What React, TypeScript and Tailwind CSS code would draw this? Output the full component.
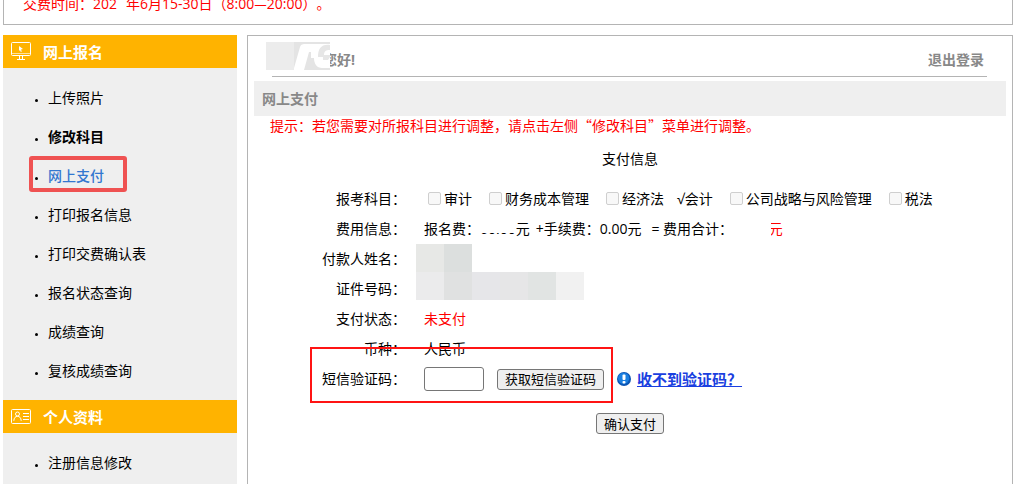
import type { ReactNode } from "react";

const registrationLinks = [
  "上传照片",
  "修改科目",
  "网上支付",
  "打印报名信息",
  "打印交费确认表",
  "报名状态查询",
  "成绩查询",
  "复核成绩查询",
];

const buttonClass =
  "h-[21px] rounded-[3px] border border-[#767676] bg-[#efefef] px-[7px] text-[13px] leading-[18px] whitespace-nowrap text-black";

function MonitorIcon() {
  return (
    <svg width="20" height="19" viewBox="0 0 20 19" fill="none" stroke="#fff" aria-hidden="true">
      <rect x="0.5" y="0.5" width="19" height="13" rx="1" />
      <path d="M1 11.5h18" opacity="0.6" />
      <path d="M8.5 14v3M11.5 14v3M6 17.5h8" />
      <path d="M8 4l4 3-2 .4.8 2-1 .5-.8-2-1 1z" fill="#fff" stroke="none" />
    </svg>
  );
}

function CardIcon() {
  return (
    <svg width="20" height="15" viewBox="0 0 20 15" fill="none" stroke="#fff" aria-hidden="true">
      <rect x="0.5" y="0.5" width="19" height="14" rx="1" />
      <circle cx="6.5" cy="5" r="2" />
      <path d="M2.8 11.8c.2-3 1.600-4.500 3.700-4.500s3.500 1.500 3.700 4.500" />
      <path d="M12 4.500h6M12 7.500h6M12 10.500h6" />
    </svg>
  );
}

function AlertIcon() {
  return (
    <svg width="14" height="14" viewBox="0 0 14 14" aria-hidden="true">
      <circle cx="7" cy="7" r="7" fill="#0a55b5" />
      <circle cx="6.600" cy="6.300" r="5.600" fill="#1b7fe0" />
      <rect x="5.500" y="2.500" width="3" height="5.500" rx="1" fill="#fff" />
      <rect x="5.500" y="9" width="3" height="2.500" rx="1" fill="#fff" />
    </svg>
  );
}

function MenuHeader({ icon, children }: { icon: ReactNode; children: ReactNode }) {
  return (
    <h2 className="flex h-[33px] items-center bg-[#ffb300] pl-2 text-[15px] font-bold text-white">
      <span className="mr-3 w-5">{icon}</span>
      {children}
    </h2>
  );
}

function MenuItem({ label }: { label: string }) {
  const active = label === "网上支付";
  const tone = active
    ? "font-medium text-[#3377d0]"
    : label === "修改科目"
      ? "font-bold text-black"
      : "text-black";
  return (
    <li className="relative flex h-[39px] items-center pl-8">
      <span className="mt-[6px] mr-[10px] size-[3px] rounded-full bg-black" />
      <a href="#" className={tone}>
        {label}
      </a>
      {active && (
        <span className="pointer-events-none absolute top-0 left-[26px] h-9 w-[98px] rounded-[3px] border-4 border-[#ef5252]" />
      )}
    </li>
  );
}

function Row({ label, htmlFor, children }: { label: string; htmlFor?: string; children?: ReactNode }) {
  const cls = "w-[158px] shrink-0 text-right";
  return (
    <div className="flex h-[30px] items-center whitespace-nowrap">
      {htmlFor ? (
        <label htmlFor={htmlFor} className={cls}>
          {label}：
        </label>
      ) : (
        <span className={cls}>{label}：</span>
      )}
      <div className="flex items-center pl-[18px]">{children}</div>
    </div>
  );
}

function Subject({ name }: { name: string }) {
  return (
    <label className="flex items-center">
      <input
        type="checkbox"
        disabled
        className="mr-[3px] mb-[2px] ml-1 size-[13px] appearance-none rounded-[2px] border border-[#cfcfcf] bg-[#f8f8f8]"
      />
      {name}
    </label>
  );
}

export default function App() {
  return (
    <div className="flex min-h-screen flex-col overflow-hidden bg-white pr-1 pl-[3px] font-['Open_Sans','Noto_Sans_CJK_SC',sans-serif] text-[14px] leading-5 text-black [text-spacing-trim:space-all]">
      <header className="h-[25px] border border-t-0 border-[#b4b4b4] pl-[19px] text-[#ff0000]">
        <p className="leading-[6px] whitespace-nowrap">
          交费时间：202
          <span className="inline-block w-[9px]" />
          年6月15-30日（8:00
          <span className="font-['Noto_Sans_CJK_SC',sans-serif]">—</span>
          20:00）。
        </p>
      </header>

      <div className="mt-[10px] flex flex-1 gap-[10px]">
        <nav className="w-[234px] shrink-0 bg-[#efefef]">
          <MenuHeader icon={<MonitorIcon />}>网上报名</MenuHeader>
          <ul className="py-[10px]">
            {registrationLinks.map((label) => (
              <MenuItem key={label} label={label} />
            ))}
          </ul>
          <MenuHeader icon={<CardIcon />}>个人资料</MenuHeader>
          <ul className="py-[10px]">
            <MenuItem label="注册信息修改" />
          </ul>
        </nav>

        <main className="min-w-0 flex-1 border border-b-0 border-[#b4b4b4]">
          <div className="relative mr-[25px] ml-6 flex h-[41px] items-center justify-between border-b border-[#b4b4b4] pt-2 pr-[3px] font-bold text-[#888888]">
            <span className="pl-[51px]">您好!</span>
            <svg
              className="absolute top-[6px] left-[-6px]"
              width="64"
              height="28"
              viewBox="0 0 64 28"
              aria-hidden="true"
            >
              <rect width="64" height="28" fill="#fff" />
              <path d="M0 0h28v28H0z" fill="#ececec" />
              <path d="M28 0h36v2H40c-3 0-5 0-6 3l-6 21z" fill="#e4e4e4" />
              <path d="M43 10h2v6h3c0 6 3 10 8 10h8v2H38z" fill="#e4e4e4" />
              <path d="M64 3c-9-1-12 4-12 12h5v3h5l2-3v-2h-6c0-4 2-5 6-5z" fill="#e6e6e6" />
            </svg>
            <a href="#">退出登录</a>
          </div>
          <h1 className="mx-[6px] mt-1 flex h-[35px] items-center bg-[#efefef] px-2 font-bold text-[#888888]">
            网上支付
          </h1>
          <p className="pl-[22px] font-['Noto_Sans_CJK_SC',sans-serif] leading-[18px] text-[#ff0000]">
            提示：若您需要对所报科目进行调整，请点击左侧“修改科目”菜单进行调整。
          </p>

          <form>
            <h2 className="mt-[14px] text-center leading-[22px]">支付信息</h2>
            <div className="mt-[14px]">
              <Row label="报考科目">
                <div className="flex items-center gap-[13px]">
                  <Subject name="审计" />
                  <Subject name="财务成本管理" />
                  <Subject name="经济法" />
                  <span>√会计</span>
                  <Subject name="公司战略与风险管理" />
                  <Subject name="税法" />
                </div>
              </Row>
              <Row label="费用信息">
                <span>报名费：</span>
                <span className="relative">
                  60.00
                  <span className="absolute inset-x-0 top-0 h-[14px] bg-white" />
                </span>
                <span>元</span>
                <span className="ml-[6px]">+手续费：</span>
                <span>0.00元</span>
                <span className="ml-[10px]">= 费用合计：</span>
                <span className="relative text-[#ff0000]">
                  60.00元
                  <span className="absolute top-0 left-0 h-5 w-[38px] bg-white" />
                </span>
              </Row>
              <div className="relative">
                <Row label="付款人姓名" />
                <Row label="证件号码" />
                <div className="absolute top-0 left-[168px] grid grid-cols-[repeat(6,28px)] grid-rows-[repeat(2,28px)]">
                  <span className="bg-[#e7e8e6]" />
                  <span className="bg-[#dcdfde]" />
                  <span className="col-span-4" />
                  <span className="bg-[#ebebec]" />
                  <span className="bg-[#e0e1e1]" />
                  <span className="bg-[#e6e6e9]" />
                  <span className="bg-[#e6e6e7]" />
                  <span className="bg-[#e1e4e3]" />
                  <span className="bg-[#f1f1f1]" />
                </div>
              </div>
              <Row label="支付状态">
                <span className="text-[#ff0000]">未支付</span>
              </Row>
              <Row label="币种">人民币</Row>
              <div className="relative">
                <Row label="短信验证码" htmlFor="sms-code">
                  <input
                    id="sms-code"
                    type="text"
                    className="h-6 w-[60px] rounded-[3px] border border-[#767676] bg-white px-1"
                  />
                  <button type="button" className={`${buttonClass} ml-[13px]`}>
                    获取短信验证码
                  </button>
                  <span className="mr-[6px] ml-[13px]">
                    <AlertIcon />
                  </span>
                  <a href="#" className="text-[15px] font-bold text-[#1a3fe0] underline">
                    收不到验证码？
                  </a>
                </Row>
                <span className="pointer-events-none absolute top-[-17px] left-[62px] h-14 w-[303px] border-2 border-[#ff1414]" />
              </div>
            </div>
            <div className="mt-[19px] flex justify-center">
              <button type="button" className={buttonClass}>
                确认支付
              </button>
            </div>
          </form>
        </main>
      </div>
    </div>
  );
}
